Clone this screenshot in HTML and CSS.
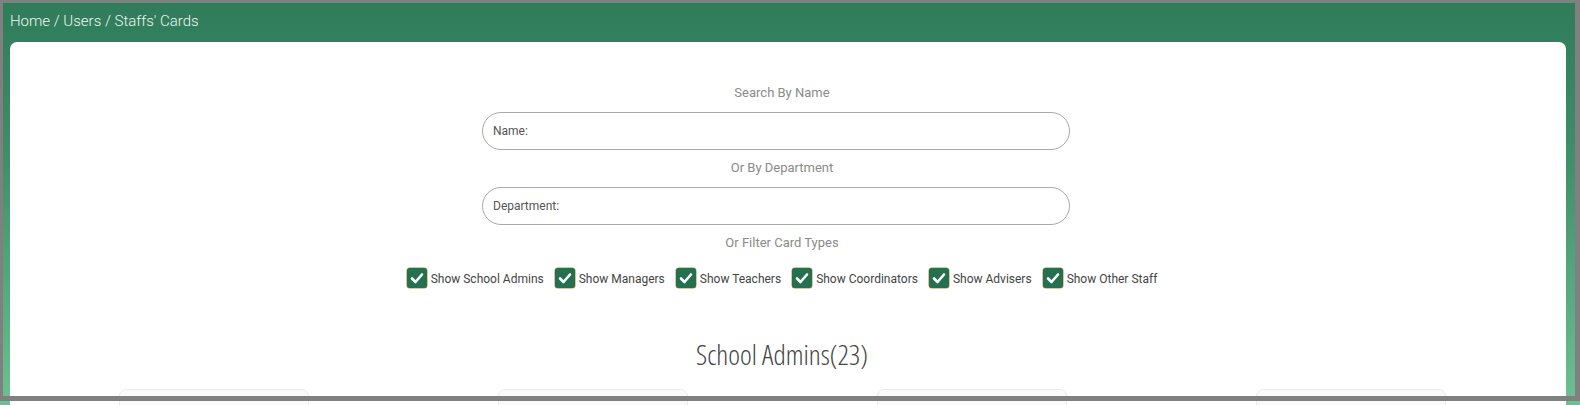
FILE: index.html
```html
<!DOCTYPE html>
<html>
  <head>
    <meta charset="UTF-8" />
    <title>Staffs' Cards</title>
    <link rel="stylesheet" href="styles.css">
  </head>
  <body>
    <div class="frame"></div>

    <div class="page">
      <div class="breadcrumb">Home / Users / Staffs' Cards</div>

      <div class="panel">
        <div class="filters">
          <p class="filter-label">Search By Name</p>
          <div class="field-wrap">
            <input type="text" class="pill-input" placeholder="Name:" />
          </div>

          <p class="filter-label label-gap">Or By Department</p>
          <div class="field-wrap">
            <input type="text" class="pill-input" placeholder="Department:" />
          </div>

          <p class="filter-label label-gap">Or Filter Card Types</p>
          <div class="type-row">
            <label class="type-check"><span class="box"><svg viewBox="0 0 20 20"><path d="M5 10.5L8.5 14L15 6.5" fill="none" stroke="#fff" stroke-width="2.6" stroke-linecap="round" stroke-linejoin="round"/></svg></span>Show School Admins</label>
            <label class="type-check"><span class="box"><svg viewBox="0 0 20 20"><path d="M5 10.5L8.5 14L15 6.5" fill="none" stroke="#fff" stroke-width="2.6" stroke-linecap="round" stroke-linejoin="round"/></svg></span>Show Managers</label>
            <label class="type-check"><span class="box"><svg viewBox="0 0 20 20"><path d="M5 10.5L8.5 14L15 6.5" fill="none" stroke="#fff" stroke-width="2.6" stroke-linecap="round" stroke-linejoin="round"/></svg></span>Show Teachers</label>
            <label class="type-check"><span class="box"><svg viewBox="0 0 20 20"><path d="M5 10.5L8.5 14L15 6.5" fill="none" stroke="#fff" stroke-width="2.6" stroke-linecap="round" stroke-linejoin="round"/></svg></span>Show Coordinators</label>
            <label class="type-check"><span class="box"><svg viewBox="0 0 20 20"><path d="M5 10.5L8.5 14L15 6.5" fill="none" stroke="#fff" stroke-width="2.6" stroke-linecap="round" stroke-linejoin="round"/></svg></span>Show Advisers</label>
            <label class="type-check"><span class="box"><svg viewBox="0 0 20 20"><path d="M5 10.5L8.5 14L15 6.5" fill="none" stroke="#fff" stroke-width="2.6" stroke-linecap="round" stroke-linejoin="round"/></svg></span>Show Other Staff</label>
          </div>
        </div>

        <h2 class="group-title">School Admins(23)</h2>

        <div class="card-grid">
          <div class="card-col"><div class="staff-card"></div></div>
          <div class="card-col"><div class="staff-card"></div></div>
          <div class="card-col"><div class="staff-card"></div></div>
          <div class="card-col"><div class="staff-card"></div></div>
        </div>
      </div>
    </div>
  </body>
</html>
```

FILE: styles.css
```css
* {
  margin: 0;
  padding: 0;
  box-sizing: border-box;
}

html,
body {
  height: 100%;
}

body {
  font-family: Roboto, "Liberation Sans", Arial, sans-serif;
  background: linear-gradient(to bottom, #2f7b5a 0px, #3f8f69 160px, #6cc192 405px);
  overflow: hidden;
}

/* grey window edge drawn over the page */
.frame {
  position: fixed;
  top: 0;
  left: 0;
  width: 1580px;
  height: 401px;
  border-style: solid;
  border-color: #808080;
  border-width: 3px 5px 5px 3px;
  pointer-events: none;
  z-index: 10;
}

.page {
  padding: 0 14px 0 10px;
}

.breadcrumb {
  height: 42px;
  padding-top: 11px;
  color: #eef6f1;
  font-size: 15px;
  font-weight: 300;
  line-height: 20px;
}

.panel {
  background-color: #ffffff;
  border-radius: 7px 7px 0 0;
  padding: 42px 26px 40px 14px;
  min-height: 400px;
}

.filters {
  display: flex;
  flex-direction: column;
  align-items: center;
}

.filter-label {
  font-size: 13px;
  line-height: 18px;
  color: #8a8a8a;
  text-align: center;
}

.field-wrap {
  width: 600px;
  margin-top: 10px;
}

.label-gap {
  margin-top: 9px;
}

.pill-input {
  display: block;
  width: 588px;
  height: 38px;
  border: 1px solid #a9a9a9;
  border-radius: 19px;
  padding: 0 10px;
  font-family: Roboto, "Liberation Sans", Arial, sans-serif;
  font-size: 12px;
  color: #444;
  background: #fff;
  outline: none;
}

.pill-input::placeholder {
  color: #555;
}

.type-row {
  display: flex;
  align-items: center;
  gap: 11px;
  margin-top: 17px;
}

.type-check {
  display: inline-flex;
  align-items: center;
  gap: 4px;
  font-size: 12px;
  color: #444;
  line-height: 20px;
}

.type-check .box {
  width: 20px;
  height: 20px;
  border-radius: 3px;
  background-color: #24704f;
  box-shadow: 0 0 0 0.5px #b58a4a;
  display: inline-flex;
  margin-top: -2px;
}

.type-check .box svg {
  width: 20px;
  height: 20px;
}

.group-title {
  margin-top: 46px;
  text-align: center;
  font-family: "Open Sans", "Noto Sans", sans-serif;
  font-stretch: condensed;
  font-weight: 300;
  font-size: 28px;
  line-height: 38px;
  color: #444;
}

.card-grid {
  display: grid;
  grid-template-columns: repeat(4, 1fr);
  margin-top: 16px;
}

.card-col {
  display: flex;
  justify-content: center;
}

.staff-card {
  width: 190px;
  height: 120px;
  background-color: #fafafa;
  border: 1px solid #ececec;
  border-radius: 7px;
}
```
